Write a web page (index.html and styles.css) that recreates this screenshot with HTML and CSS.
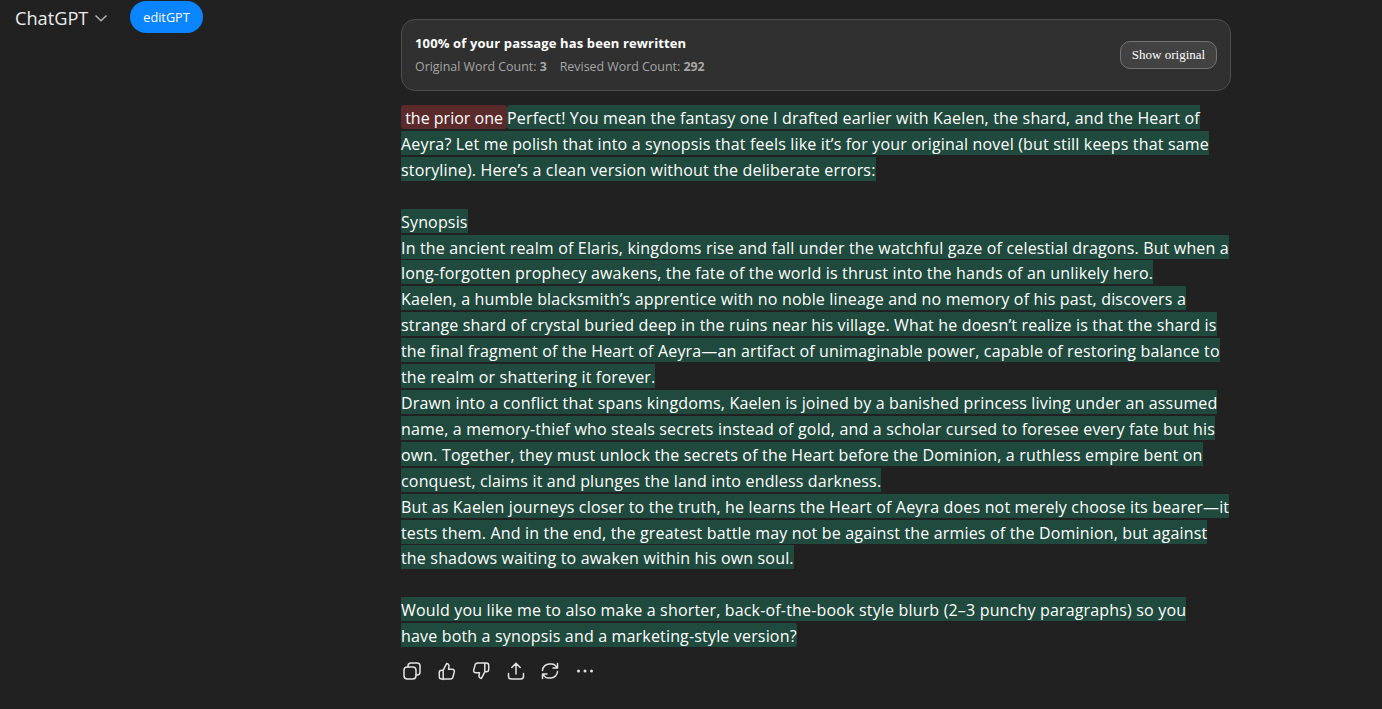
FILE: index.html
```html
<!doctype html>
<html>
  <head>
    <meta charset="UTF-8" />
    <title>ChatGPT</title>
    <link rel="stylesheet" href="styles.css">
  </head>
  <body>
    <header class="topbar">
      <div class="model">ChatGPT
        <svg class="chevron" width="14" height="14" viewBox="0 0 14 14"><path d="M1.500 4.500 7 9.800l5.500-5.300" /></svg>
      </div>
      <button class="edit-btn">editGPT</button>
    </header>
    <main class="thread">
      <section class="banner">
        <div>
          <div class="banner-title">100% of your passage has been rewritten</div>
          <div class="banner-counts">
            <span>Original Word Count: <b>3</b></span>
            <span>Revised Word Count: <b>292</b></span>
          </div>
        </div>
        <button class="show-btn">Show original</button>
      </section>
      <div class="message"><span class="del">&nbsp;the prior one&nbsp;</span><span class="add">Perfect! You mean the fantasy one I drafted earlier with Kaelen, the shard, and the Heart of<br>Aeyra? Let me polish that into a synopsis that feels like it’s for your original novel (but still keeps that same<br>storyline). Here’s a clean version without the deliberate errors:<br><br>Synopsis<br>In the ancient realm of Elaris, kingdoms rise and fall under the watchful gaze of celestial dragons. But when a<br>long-forgotten prophecy awakens, the fate of the world is thrust into the hands of an unlikely hero.<br>Kaelen, a humble blacksmith’s apprentice with no noble lineage and no memory of his past, discovers a<br>strange shard of crystal buried deep in the ruins near his village. What he doesn’t realize is that the shard is<br>the final fragment of the Heart of Aeyra—an artifact of unimaginable power, capable of restoring balance to<br>the realm or shattering it forever.<br>Drawn into a conflict that spans kingdoms, Kaelen is joined by a banished princess living under an assumed<br>name, a memory-thief who steals secrets instead of gold, and a scholar cursed to foresee every fate but his<br>own. Together, they must unlock the secrets of the Heart before the Dominion, a ruthless empire bent on<br>conquest, claims it and plunges the land into endless darkness.<br>But as Kaelen journeys closer to the truth, he learns the Heart of Aeyra does not merely choose its bearer—it<br>tests them. And in the end, the greatest battle may not be against the armies of the Dominion, but against<br>the shadows waiting to awaken within his own soul.<br><br>Would you like me to also make a shorter, back-of-the-book style blurb (2–3 punchy paragraphs) so you<br>have both a synopsis and a marketing-style version?</span></div>
      <div class="actions">
        <svg class="icon" viewBox="0 0 20 20"><rect x="2" y="6" width="12" height="12" rx="3.200" /><path d="M6 6V5a3 3 0 0 1 3-3h6a3 3 0 0 1 3 3v6a3 3 0 0 1-3 3h-1" /></svg>
        <svg class="icon" viewBox="0 0 20 20"><path d="M6.200 9.200 9.600 2.600c1.600 0 2.600 1.200 2.400 2.800l-.5 2.800h3.700c1.500 0 2.500 1.300 2.100 2.700l-1.300 4.900c-.3 1.300-1.400 2.200-2.700 2.200H4.600c-1.300 0-2.300-1-2.300-2.300v-4.200c0-1.300 1-2.300 2.300-2.300h1.600zM6.200 9.200v9.300" /></svg>
        <svg class="icon" viewBox="0 0 20 20"><path d="M13.800 10.800 10.400 17.400c-1.600 0-2.600-1.200-2.400-2.800l.5-2.800H4.800c-1.500 0-2.500-1.300-2.100-2.700L4 4.200C4.300 2.900 5.400 2 6.700 2h8.700c1.300 0 2.300 1 2.300 2.300v4.200c0 1.300-1 2.300-2.300 2.300h-1.600zM13.800 10.800V2" /></svg>
        <svg class="icon" viewBox="0 0 20 20"><path d="M10 13V2.500M5.800 6.500 10 2.300l4.200 4.200M2.500 12.500v2.700c0 1.600 1.200 2.800 2.800 2.800h9.400c1.600 0 2.800-1.200 2.800-2.800v-2.700" /></svg>
        <svg class="icon" viewBox="0 0 20 20"><path d="M2.500 9.500A6.800 6.800 0 0 1 9.300 3h2.500a5 5 0 0 1 3.900 1.900L17.500 7M17.500 2.500V7H13M17.500 10.500A6.800 6.800 0 0 1 10.700 17H8.200a5 5 0 0 1-3.900-1.900L2.500 13M2.500 17.500V13H7" /></svg>
        <svg class="icon" viewBox="0 0 20 20"><circle cx="3.500" cy="10" r="1.500" class="dot" /><circle cx="10" cy="10" r="1.500" class="dot" /><circle cx="16.500" cy="10" r="1.500" class="dot" /></svg>
      </div>
    </main>
  </body>
</html>
```

FILE: styles.css
```css
body {
  margin: 0;
  height: 709px;
  overflow: hidden;
  background: #212121;
  color: #fff;
  font-family: "Open Sans", "Noto Sans", sans-serif;
}
.topbar {
  display: flex;
  align-items: flex-start;
  height: 18px;
  padding: 1px 0 0 15px;
}
.model {
  display: flex;
  align-items: center;
  gap: 6px;
  width: 115px;
  height: 34px;
  font-size: 18.200px;
  color: #ececec;
}
.chevron {
  fill: none;
  stroke: #b4b4b4;
  stroke-width: 1.500;
}
.edit-btn {
  width: 73px;
  height: 32px;
  border: 0;
  border-radius: 16px;
  padding: 0;
  background: #0a84ff;
  color: #fff;
  font-family: inherit;
  font-size: 12.700px;
}
.thread {
  width: 830px;
  margin-left: 401px;
}
.banner {
  display: flex;
  align-items: center;
  justify-content: space-between;
  box-sizing: border-box;
  height: 72px;
  padding: 0 13px;
  border: 1px solid #4d4d4d;
  border-radius: 14px;
  background: #303030;
}
.banner-title {
  font-size: 13px;
  font-weight: 700;
  line-height: 18px;
  letter-spacing: .13px;
}
.banner-counts {
  display: flex;
  gap: 13px;
  margin-top: 6px;
  font-size: 12.400px;
  line-height: 18px;
  color: #a6a6a6;
}
.show-btn {
  width: 97px;
  height: 28px;
  padding: 0;
  border: 1px solid #737373;
  border-radius: 10px;
  background: #424242;
  color: #fff;
  font-family: "Liberation Serif", serif;
  font-size: 13px;
}
.message {
  margin-top: 15px;
  font-size: 16px;
  line-height: 25.900px;
  letter-spacing: .17px;
  white-space: nowrap;
}
.del {
  background: #5b2b2b;
  border-radius: 3px;
  padding-top: 2px;
  letter-spacing: 0;
}
.add {
  background: #1f4a3d;
  border-radius: 3px;
  padding-top: 2px;
}
.actions {
  display: flex;
  gap: 14.500px;
  margin: 11px 0 0 1px;
}
.icon {
  width: 20px;
  height: 20px;
  fill: none;
  stroke: #e3e3e3;
  stroke-width: 1.500;
  stroke-linecap: round;
  stroke-linejoin: round;
}
.icon .dot {
  fill: #e3e3e3;
  stroke: none;
}
```
